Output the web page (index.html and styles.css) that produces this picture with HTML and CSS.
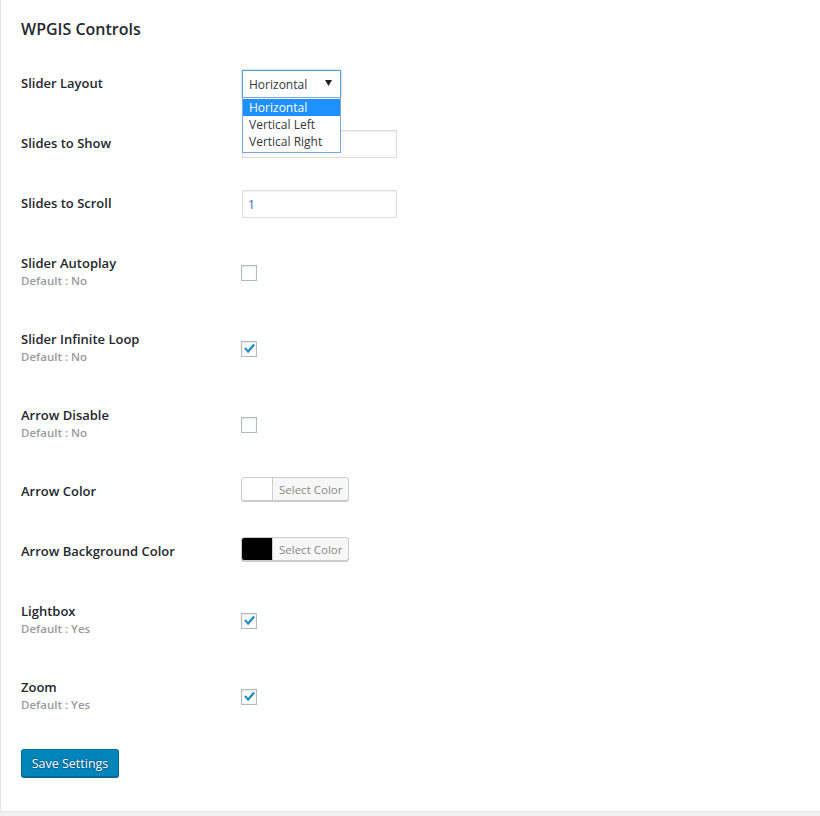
FILE: index.html
```html
<!DOCTYPE html>
<html lang="en">
<head>
<meta charset="utf-8">
<title>WPGIS Controls</title>
<link rel="stylesheet" href="styles.css">
</head>
<body>
<div class="card">
  <h2 class="title">WPGIS Controls</h2>
  <form class="form">
    <div class="row">
      <div class="th"><div class="label">Slider Layout</div></div>
      <div class="td td-input">
        <div class="select-wrap">
          <div class="select">
            <span>Horizontal</span>
            <svg class="caret" width="7" height="6" viewBox="0 0 7 6"><path d="M0 0H7L3.5 6Z" fill="#222"/></svg>
          </div>
          <ul class="dropdown">
            <li class="opt active">Horizontal</li>
            <li class="opt">Vertical Left</li>
            <li class="opt">Vertical Right</li>
          </ul>
        </div>
      </div>
    </div>
    <div class="row">
      <div class="th"><div class="label">Slides to Show</div></div>
      <div class="td td-input"><div class="text-input"></div></div>
    </div>
    <div class="row">
      <div class="th"><div class="label">Slides to Scroll</div></div>
      <div class="td td-input"><div class="text-input">1</div></div>
    </div>
    <div class="row">
      <div class="th"><div class="label">Slider Autoplay</div><div class="hint">Default : No</div></div>
      <div class="td td-check"><span class="checkbox"></span></div>
    </div>
    <div class="row">
      <div class="th"><div class="label">Slider Infinite Loop</div><div class="hint">Default : No</div></div>
      <div class="td td-check"><span class="checkbox"><svg viewBox="0 0 16 16" width="16" height="16"><path d="M3.2 7.6 L5 6.2 L7 9 L12.2 2.8 L14 4.2 L7.1 12.3 Z" fill="#1e8cbe"/></svg></span></div>
    </div>
    <div class="row">
      <div class="th"><div class="label">Arrow Disable</div><div class="hint">Default : No</div></div>
      <div class="td td-check"><span class="checkbox"></span></div>
    </div>
    <div class="row">
      <div class="th"><div class="label">Arrow Color</div></div>
      <div class="td td-color"><div class="color-btn"><span class="swatch swatch-white"></span><span class="color-text">Select Color</span></div></div>
    </div>
    <div class="row">
      <div class="th"><div class="label">Arrow Background Color</div></div>
      <div class="td td-color"><div class="color-btn"><span class="swatch swatch-black"></span><span class="color-text">Select Color</span></div></div>
    </div>
    <div class="row">
      <div class="th"><div class="label">Lightbox</div><div class="hint">Default : Yes</div></div>
      <div class="td td-check"><span class="checkbox"><svg viewBox="0 0 16 16" width="16" height="16"><path d="M3.2 7.6 L5 6.2 L7 9 L12.2 2.8 L14 4.2 L7.1 12.3 Z" fill="#1e8cbe"/></svg></span></div>
    </div>
    <div class="row">
      <div class="th"><div class="label">Zoom</div><div class="hint">Default : Yes</div></div>
      <div class="td td-check"><span class="checkbox"><svg viewBox="0 0 16 16" width="16" height="16"><path d="M3.2 7.6 L5 6.2 L7 9 L12.2 2.8 L14 4.2 L7.1 12.3 Z" fill="#1e8cbe"/></svg></span></div>
    </div>
    <div class="submit">
      <button type="button" class="btn-primary">Save Settings</button>
    </div>
  </form>
</div>
</body>
</html>
```
FILE: styles.css
```css
* { box-sizing: border-box; }
html, body { margin: 0; padding: 0; }
body {
  background: #f1f1f1;
  font-family: "Open Sans", "Noto Sans", sans-serif;
  color: #23282d;
  height: 816px;
  overflow: hidden;
}
.card {
  background: #fff;
  border-left: 1px solid #e5e5e5;
  border-bottom: 1px solid #e5e5e5;
  height: 812px;
  padding: 0 20px;
}
.title {
  margin: 0 0 13px;
  padding-top: 17px;
  font-size: 16px;
  line-height: 24px;
  font-weight: 600;
  color: #23282d;
}
.row {
  display: flex;
  align-items: flex-start;
}
.th {
  width: 221px;
  flex: none;
  padding: 20px 0;
}
.label {
  font-size: 13px;
  line-height: 18px;
  font-weight: 600;
  color: #23282d;
}
.hint {
  font-size: 11.5px;
  line-height: 18px;
  font-weight: 600;
  color: #9a9a9a;
}
.td { flex: 1; }
.td-input { padding: 16px 0; }
.td-check { padding-top: 31px; }
.td-color { padding: 15px 0 21px; }
.select-wrap { position: relative; width: 99px; }
.select {
  height: 28px;
  width: 99px;
  border: 1px solid #5b9dd9;
  box-shadow: 0 0 2px rgba(30,140,190,.6);
  background: #fff;
  display: flex;
  align-items: center;
  justify-content: space-between;
  padding: 0 8px 0 6px;
  font-size: 12px;
  color: #32373c;
}
.caret { margin-top: -2px; }
.dropdown {
  position: absolute;
  left: 0;
  top: 27px;
  width: 99px;
  margin: 0;
  padding: 1px 0 2px;
  list-style: none;
  background: #fff;
  border: 1px solid #7aa7e0;
  z-index: 5;
}
.opt {
  height: 17px;
  line-height: 17px;
  padding-left: 6px;
  font-size: 12px;
  color: #32373c;
}
.opt.active { background: #1e90ff; color: #fff; }
.text-input {
  width: 155px;
  height: 28px;
  border: 1px solid #ddd;
  box-shadow: inset 0 1px 2px rgba(0,0,0,.07);
  background: #fff;
  padding: 0 5px;
  font-size: 12px;
  line-height: 27px;
  color: #2e6eb0;
}
.checkbox {
  display: block;
  width: 16px;
  height: 16px;
  margin-left: -1px;
  border: 1px solid #b4b9be;
  background: #fff;
  box-shadow: inset 0 1px 2px rgba(0,0,0,.1);
  position: relative;
}
.checkbox svg { position: absolute; left: -1px; top: -1px; }
.color-btn {
  margin-left: -1px;
  width: 108px;
  height: 24px;
  display: flex;
  border: 1px solid #ccc;
  border-radius: 3px;
  background: #f7f7f7;
  box-shadow: 0 1px 0 #ccc;
  overflow: hidden;
}
.swatch {
  width: 31px;
  flex: none;
  border-right: 1px solid #ccc;
}
.swatch-white { background: #fff; }
.swatch-black { background: #000; }
.color-text {
  flex: 1;
  font-size: 11.5px;
  line-height: 23px;
  color: #888;
  padding-left: 6px;
}
.submit { padding-top: 15px; }
.btn-primary {
  display: block;
  height: 28px;
  width: 98px;
  padding: 0;
  background: #0085ba;
  border: 1px solid #0073aa;
  border-color: #0073aa #006799 #006799;
  border-radius: 3px;
  box-shadow: 0 1px 0 #006799;
  color: #fff;
  font-family: "Open Sans", "Noto Sans", sans-serif;
  font-size: 12.5px;
  line-height: 27px;
  text-align: center;
  text-shadow: 0 -1px 1px #006799, 1px 0 1px #006799, 0 1px 1px #006799, -1px 0 1px #006799;
}
```
